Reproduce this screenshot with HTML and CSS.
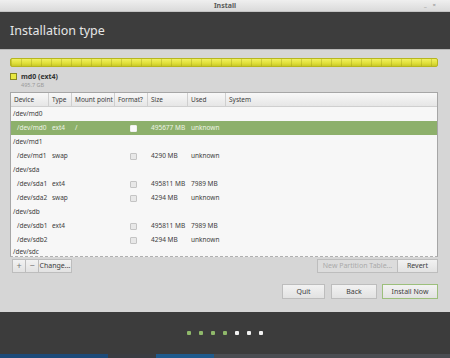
FILE: index.html
```html
<!DOCTYPE html>
<html>
<head>
<meta charset="utf-8">
<link rel="stylesheet" href="styles.css">
</head>
<body>
<div class="window">
  <div class="titlebar">
    <span class="wtitle">Install</span>
    <span class="wctrl"><span class="min">_</span><span class="close">×</span></span>
  </div>
  <div class="header">Installation type</div>
  <div class="main">
    <div class="diskbar"></div>
    <div class="legend">
      <span class="swatch"></span>
      <div class="legend-text">
        <div class="lname">md0 (ext4)</div>
        <div class="lsize">495.7 GB</div>
      </div>
    </div>
    <div class="table">
      <div class="row head">
        <div class="c">Device</div><div class="c">Type</div><div class="c">Mount point</div><div class="c">Format?</div><div class="c">Size</div><div class="c">Used</div><div class="c last">System</div>
      </div>
      <div class="row group"><div class="c">/dev/md0</div></div>
      <div class="row sel">
        <div class="c ind">/dev/md0</div><div class="c">ext4</div><div class="c">/</div><div class="c chk"><span class="box on"></span></div><div class="c">495677 MB</div><div class="c">unknown</div><div class="c"></div>
      </div>
      <div class="row group"><div class="c">/dev/md1</div></div>
      <div class="row">
        <div class="c ind">/dev/md1</div><div class="c">swap</div><div class="c"></div><div class="c chk"><span class="box"></span></div><div class="c">4290 MB</div><div class="c">unknown</div><div class="c"></div>
      </div>
      <div class="row group"><div class="c">/dev/sda</div></div>
      <div class="row">
        <div class="c ind">/dev/sda1</div><div class="c">ext4</div><div class="c"></div><div class="c chk"><span class="box"></span></div><div class="c">495811 MB</div><div class="c">7989 MB</div><div class="c"></div>
      </div>
      <div class="row">
        <div class="c ind">/dev/sda2</div><div class="c">swap</div><div class="c"></div><div class="c chk"><span class="box"></span></div><div class="c">4294 MB</div><div class="c">unknown</div><div class="c"></div>
      </div>
      <div class="row group"><div class="c">/dev/sdb</div></div>
      <div class="row">
        <div class="c ind">/dev/sdb1</div><div class="c">ext4</div><div class="c"></div><div class="c chk"><span class="box"></span></div><div class="c">495811 MB</div><div class="c">7989 MB</div><div class="c"></div>
      </div>
      <div class="row">
        <div class="c ind">/dev/sdb2</div><div class="c"></div><div class="c"></div><div class="c chk"><span class="box"></span></div><div class="c">4294 MB</div><div class="c">unknown</div><div class="c"></div>
      </div>
      <div class="row group lastrow"><div class="c">/dev/sdc</div></div>
    </div>
    <div class="toolrow">
      <div class="tools">
        <span class="btn sq">+</span><span class="btn sq">−</span><span class="btn change">Change...</span>
      </div>
      <div class="tools">
        <span class="btn npt">New Partition Table...</span><span class="btn revert">Revert</span>
      </div>
    </div>
    <div class="actions">
      <span class="btn act quit">Quit</span>
      <span class="btn act back">Back</span>
      <span class="btn act install">Install Now</span>
    </div>
  </div>
  <div class="footer">
    <span class="dot g"></span><span class="dot g"></span><span class="dot g"></span><span class="dot g"></span><span class="dot w"></span><span class="dot w"></span><span class="dot w"></span>
  </div>
  <div class="taskbar">
    <span class="tb tb1"></span><span class="tb tb2"></span><span class="tb tb3"></span><span class="tb tb4"></span>
  </div>
</div>
</body>
</html>
```
FILE: styles.css
```css
* { box-sizing: border-box; }
html, body { margin: 0; padding: 0; }
body {
  width: 450px;
  height: 358px;
  overflow: hidden;
  background: #d6d6d6;
  font-family: "Noto Sans", "DejaVu Sans", sans-serif;
}
.window { width: 450px; height: 358px; display: flex; flex-direction: column; }

.titlebar {
  height: 12px;
  background: linear-gradient(#efefef, #dadada);
  position: relative;
  display: flex;
  align-items: center;
  justify-content: center;
  border-bottom: 1px solid #c4c4c4;
}
.wtitle { font-size: 7px; font-weight: bold; color: #5a5a5a; line-height: 12px; }
.wctrl { position: absolute; right: 14px; top: 0; display: flex; gap: 6px; font-size: 6px; color: #8a8a8a; line-height: 11px; }

.header {
  height: 38px;
  background: #3d3d3d;
  color: #e6e6e6;
  font-size: 12.5px;
  line-height: 38px;
  padding-left: 10px;
  border-bottom: 1px solid #b8b8b8;
}

.main {
  height: 262px;
  background: #d6d6d6;
  padding: 8px 12px 0 10px;
  display: flex;
  flex-direction: column;
}

.diskbar {
  height: 9px;
  border: 1px solid #b6b61e;
  border-radius: 2px;
  background:
    repeating-linear-gradient(90deg, rgba(150,150,20,0.35) 0 1px, transparent 1px 10px),
    linear-gradient(#f0f060, #e0e03a 60%, #c8c82a);
}

.legend { display: flex; gap: 4px; margin-top: 5px; height: 20px; }
.swatch { width: 7px; height: 7px; margin-top: 1px; background: #e8e840; border: 1px solid #8a8a20; }
.legend-text { display: flex; flex-direction: column; }
.lname { font-size: 7px; font-weight: bold; color: #333; line-height: 9px; }
.lsize { font-size: 5.5px; color: #9a9a9a; line-height: 7px; margin-top: 1px; }

.table {
  height: 165px;
  border: 1px solid #a6a6a6;
  background: #f7f7f7;
  overflow: hidden;
  border-bottom: 1px dashed #b0b0b0;
}
.row {
  display: grid;
  grid-template-columns: 38px 23px 43px 33px 40px 38px 1fr;
  height: 14px;
  font-size: 6.5px;
  line-height: 14px;
  color: #3c3c3c;
}
.row .c { padding-left: 3px; white-space: nowrap; overflow: hidden; }
.row .c.ind { padding-left: 6px; }
.row.group { display: block; }
.row.group .c { padding-left: 2px; }
.row.lastrow { height: 8px; line-height: 10px; }
.row.head {
  background: linear-gradient(#f8f8f8, #e6e6e6);
  border-bottom: 1px solid #cfcfcf;
  height: 14px;
}
.row.head .c { border-right: 1px solid #cfcfcf; padding-left: 3px; }
.row.head .c.last { border-right: none; }
.row.sel { background: #8db06b; color: #eef4e6; }
.chk { display: flex; align-items: center; justify-content: center; }
.box { width: 7px; height: 7px; border: 1px solid #c4c4c4; background: #e8e8e8; border-radius: 1px; }
.box.on { background: #fbfbfb; border-color: #f0f0f0; }

.toolrow { display: flex; justify-content: space-between; margin-top: 2px; padding-left: 2px; }
.tools { display: flex; }
.btn {
  height: 14px;
  font-size: 7px;
  line-height: 12px;
  color: #3c3c3c;
  border: 1px solid #bdbdbd;
  background: linear-gradient(#f2f2f2, #e2e2e2);
  text-align: center;
  display: inline-block;
}
.btn.sq { width: 13px; color: #777; font-size: 9px; border-right: none; }
.btn.change { width: 34px; }
.btn.npt { width: 80px; color: #aaa; background: #dcdcdc; border-right: none; }
.btn.revert { width: 41px; }

.actions { display: flex; justify-content: flex-end; gap: 6px; margin-top: 11px; }
.btn.act { height: 15px; line-height: 13px; }
.quit { width: 43px; }
.back { width: 46px; margin-right: -1px; }
.install { width: 56px; border-color: #9cbf7c; }

.footer {
  height: 42px;
  background: #3c3c3c;
  display: flex;
  justify-content: center;
  align-items: center;
  gap: 8px;
}
.dot { width: 4px; height: 4px; border-radius: 1px; }
.dot.g { background: #8fb86a; }
.dot.w { background: #f2f2f2; }

.taskbar { height: 4px; background: #3a3d42; display: flex; }
.tb { height: 4px; display: block; }
.tb1 { width: 108px; background: #1d4a78; }
.tb2 { width: 48px; background: #3a3d42; }
.tb3 { width: 58px; background: #1f5a8c; }
.tb4 { flex: 1; background: #4a4d52; }
```
